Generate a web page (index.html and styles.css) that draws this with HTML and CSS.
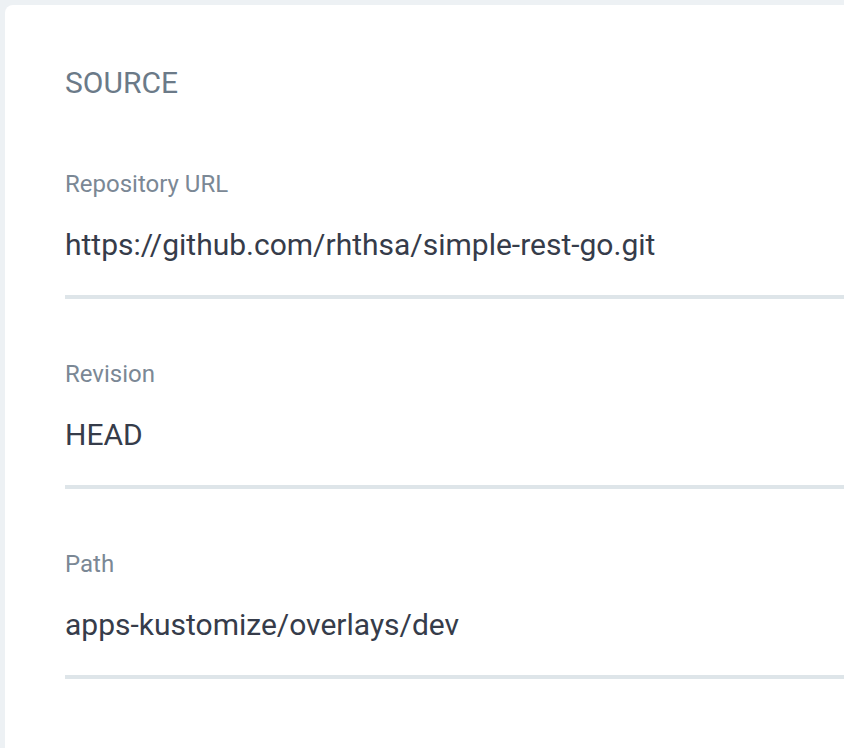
FILE: index.html
```html
<!DOCTYPE html>
<html>
<head>
<meta charset="utf-8">
<link rel="stylesheet" href="styles.css">
</head>
<body>
<div class="card">
  <h2 class="title">SOURCE</h2>
  <div class="field">
    <div class="label">Repository URL</div>
    <div class="value">https://github.com/rhthsa/simple-rest-go.git</div>
  </div>
  <div class="field">
    <div class="label">Revision</div>
    <div class="value">HEAD</div>
  </div>
  <div class="field">
    <div class="label">Path</div>
    <div class="value">apps-kustomize/overlays/dev</div>
  </div>
</div>
</body>
</html>
```
FILE: styles.css
```css
html, body {
  margin: 0;
  height: 100%;
}
body {
  background: #edf1f4;
  padding: 5px 0 0 5px;
  box-sizing: border-box;
  overflow: hidden;
  font-family: Roboto, "Noto Sans", sans-serif;
}
.card {
  background: #ffffff;
  border-top-left-radius: 8px;
  height: 100%;
  padding: 63px 0 0 60px;
  box-sizing: border-box;
}
.title {
  margin: 0 0 72px 0;
  font-size: 30px;
  font-weight: 400;
  line-height: 30px;
  color: #6b7a88;
}
.field {
  margin-bottom: 61px;
}
.label {
  font-size: 24px;
  line-height: 28px;
  color: #7b8895;
}
.value {
  font-size: 30px;
  line-height: 36px;
  color: #363c4a;
  padding: 29px 0 32px 0;
  border-bottom: 4px solid #dee5e9;
}
```
